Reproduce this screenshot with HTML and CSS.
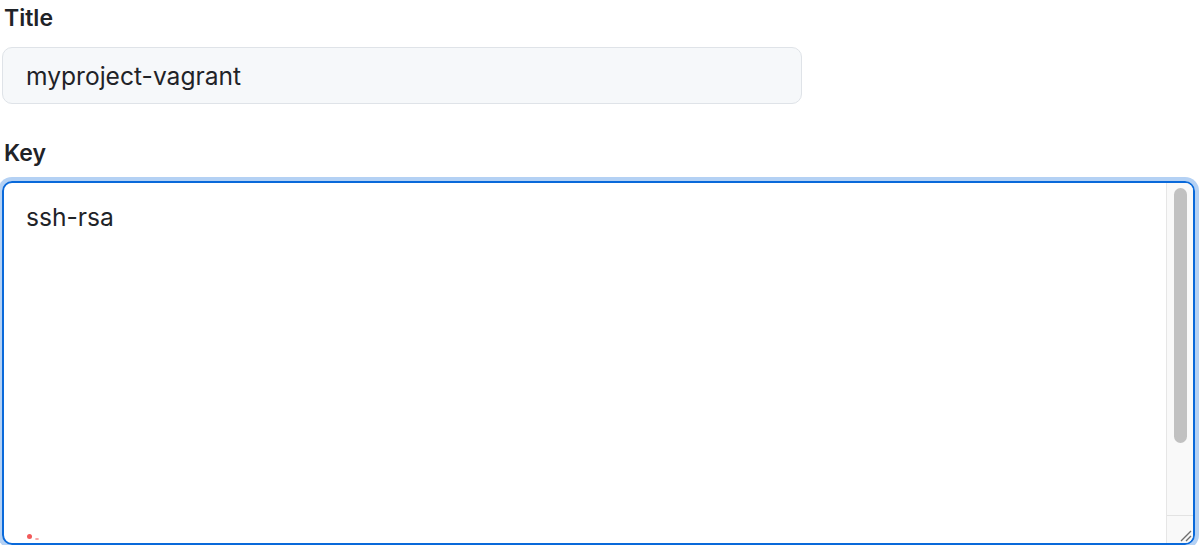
FILE: index.html
```html
<!DOCTYPE html>
<html lang="en">
<head>
  <meta charset="UTF-8" />
  <meta name="viewport" content="width=device-width, initial-scale=1.0" />
  <title>Add new SSH key</title>
  <link rel="stylesheet" href="styles.css">
</head>
<body>
  <form class="form">
    <label class="label" for="title">Title</label>
    <input class="input" id="title" type="text" value="myproject-vagrant" />

    <label class="label key-label" for="key">Key</label>
    <div class="keybox" id="key">
      <div class="keybox-text">ssh-rsa</div>
      <div class="scrollbar">
        <div class="scroll-track">
          <div class="scroll-thumb"></div>
        </div>
        <div class="resizer">
          <svg width="14" height="14" viewBox="0 0 14 14">
            <path d="M3 13 L13 3 M8 13 L13 8" stroke="#6e6e6e" stroke-width="1.4" fill="none" />
          </svg>
        </div>
      </div>
      <!-- spellcheck marker from the browser extension -->
      <span class="spell-dot"></span>
      <span class="spell-dot small"></span>
    </div>
  </form>
</body>
</html>
```

FILE: styles.css
```css
html, body {
  margin: 0;
  padding: 0;
  background: #fff;
  font-family: Inter, "Noto Sans", sans-serif;
  color: #1f2328;
  overflow: hidden;
}

.form {
  padding: 0 5px 0 2px;
}

.label {
  display: block;
  font-weight: 600;
  font-size: 23px;
  line-height: 36px;
  padding-left: 2px;
}

.input {
  display: block;
  box-sizing: border-box;
  width: 800px;
  height: 57px;
  margin-top: 11px;
  padding: 0 23px;
  font-family: inherit;
  font-size: 24.6px;
  color: #1f2328;
  background: #f6f8fa;
  border: 1.5px solid #dfe3e8;
  border-radius: 10px;
  outline: none;
}

.key-label {
  margin-top: 31px;
}

.keybox {
  position: relative;
  display: flex;
  box-sizing: border-box;
  height: 364px;
  margin-top: 10px;
  border: 2px solid #0969da;
  border-radius: 10px;
  box-shadow: 0 0 0 4px #b4d1f4;
  overflow: hidden;
}

.keybox-text {
  flex: 1;
  padding: 16px 22px;
  font-size: 24.6px;
  line-height: 36px;
}

.scrollbar {
  display: flex;
  flex-direction: column;
  width: 26px;
  background: #f9f9f9;
  border-left: 1px solid #e6e6e6;
}

.scroll-track {
  flex: 1;
  padding: 5px 6px 0 7px;
}

.scroll-thumb {
  height: 255px;
  background: #c1c1c1;
  border-radius: 7px;
}

.resizer {
  height: 27px;
  border-top: 1px solid #e3e3e3;
  display: flex;
  justify-content: flex-end;
  align-items: flex-end;
}

.resizer svg {
  display: block;
  margin: 0 1px 1px 0;
}

.spell-dot {
  position: absolute;
  left: 23px;
  bottom: 4px;
  width: 5px;
  height: 5px;
  border-radius: 50%;
  background: #f25a5a;
}

.spell-dot.small {
  left: 31px;
  bottom: 3px;
  width: 4px;
  height: 2px;
  background: #f7a0a0;
}
```
